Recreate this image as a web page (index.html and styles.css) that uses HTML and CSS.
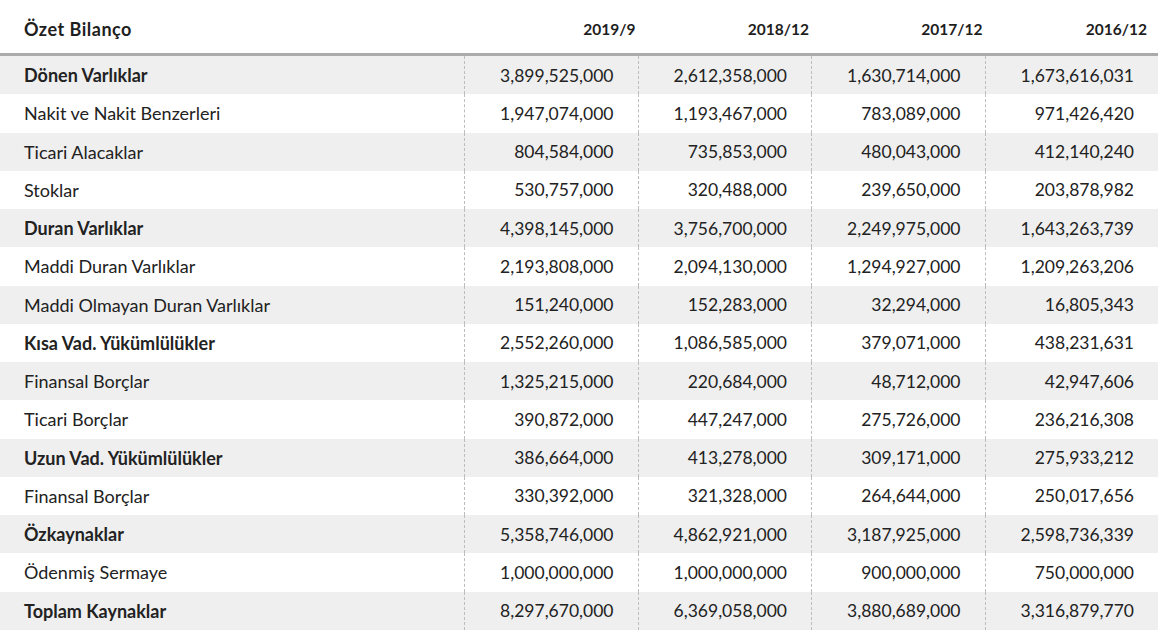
FILE: index.html
```html
<!DOCTYPE html>
<html lang="tr">
<head>
<meta charset="utf-8">
<title>Özet Bilanço</title>
<link rel="stylesheet" href="styles.css">
</head>
<body>
<table class="bilanco">
  <colgroup>
    <col class="col-label">
    <col class="col-year">
    <col class="col-year">
    <col class="col-year">
    <col class="col-year">
  </colgroup>
  <thead>
    <tr>
      <th class="label">Özet Bilanço</th>
      <th class="year">2019/9</th>
      <th class="year">2018/12</th>
      <th class="year">2017/12</th>
      <th class="year last">2016/12</th>
    </tr>
  </thead>
  <tbody>
    <tr class="shade strong"><td class="label">Dönen Varlıklar</td><td>3,899,525,000</td><td>2,612,358,000</td><td>1,630,714,000</td><td>1,673,616,031</td></tr>
    <tr><td class="label">Nakit ve Nakit Benzerleri</td><td>1,947,074,000</td><td>1,193,467,000</td><td>783,089,000</td><td>971,426,420</td></tr>
    <tr class="shade"><td class="label">Ticari Alacaklar</td><td>804,584,000</td><td>735,853,000</td><td>480,043,000</td><td>412,140,240</td></tr>
    <tr><td class="label">Stoklar</td><td>530,757,000</td><td>320,488,000</td><td>239,650,000</td><td>203,878,982</td></tr>
    <tr class="shade strong"><td class="label">Duran Varlıklar</td><td>4,398,145,000</td><td>3,756,700,000</td><td>2,249,975,000</td><td>1,643,263,739</td></tr>
    <tr><td class="label">Maddi Duran Varlıklar</td><td>2,193,808,000</td><td>2,094,130,000</td><td>1,294,927,000</td><td>1,209,263,206</td></tr>
    <tr class="shade"><td class="label">Maddi Olmayan Duran Varlıklar</td><td>151,240,000</td><td>152,283,000</td><td>32,294,000</td><td>16,805,343</td></tr>
    <tr class="strong"><td class="label">Kısa Vad. Yükümlülükler</td><td>2,552,260,000</td><td>1,086,585,000</td><td>379,071,000</td><td>438,231,631</td></tr>
    <tr class="shade"><td class="label">Finansal Borçlar</td><td>1,325,215,000</td><td>220,684,000</td><td>48,712,000</td><td>42,947,606</td></tr>
    <tr><td class="label">Ticari Borçlar</td><td>390,872,000</td><td>447,247,000</td><td>275,726,000</td><td>236,216,308</td></tr>
    <tr class="shade strong"><td class="label">Uzun Vad. Yükümlülükler</td><td>386,664,000</td><td>413,278,000</td><td>309,171,000</td><td>275,933,212</td></tr>
    <tr><td class="label">Finansal Borçlar</td><td>330,392,000</td><td>321,328,000</td><td>264,644,000</td><td>250,017,656</td></tr>
    <tr class="shade strong"><td class="label">Özkaynaklar</td><td>5,358,746,000</td><td>4,862,921,000</td><td>3,187,925,000</td><td>2,598,736,339</td></tr>
    <tr><td class="label">Ödenmiş Sermaye</td><td>1,000,000,000</td><td>1,000,000,000</td><td>900,000,000</td><td>750,000,000</td></tr>
    <tr class="shade strong"><td class="label">Toplam Kaynaklar</td><td>8,297,670,000</td><td>6,369,058,000</td><td>3,880,689,000</td><td>3,316,879,770</td></tr>
  </tbody>
</table>
</body>
</html>
```

FILE: styles.css
```css
html, body {
  margin: 0;
  padding: 0;
  background: #ffffff;
}

body {
  color: #222222;
  font-family: Lato, "Liberation Sans", sans-serif;
}

.bilanco {
  width: 1158px;
  border-collapse: separate;
  border-spacing: 0;
  table-layout: fixed;
}

.col-label {
  width: 464px;
}

.col-year {
  width: 173.5px;
}

.bilanco th,
.bilanco td {
  padding: 0;
  white-space: nowrap;
  vertical-align: middle;
}

.bilanco .label {
  text-align: left;
  padding-left: 24px;
  font-size: 18px;
}

.bilanco thead tr {
  height: 56px;
}

.bilanco thead th {
  border-bottom: 3px solid #ababab;
  padding-top: 5px;
  font-weight: 700;
  color: #1e1e1e;
}

.bilanco th.label {
  font-size: 18px;
  letter-spacing: 0.5px;
}

.bilanco th.year {
  text-align: right;
  padding-right: 2px;
  font-size: 15.5px;
}

.bilanco th.year.last {
  padding-right: 11px;
}

.bilanco tbody tr {
  height: 38.26px;
}

.bilanco tbody td {
  text-align: right;
  padding-right: 24px;
  font-size: 17.5px;
  color: #222222;
  border-left: 1px dashed #bdbdbd;
}

.bilanco tbody td.label {
  border-left: none;
  font-size: 18px;
}

.bilanco tbody tr.shade td {
  background: #efefef;
}

.bilanco tbody tr.strong td.label {
  font-weight: 700;
}
```
